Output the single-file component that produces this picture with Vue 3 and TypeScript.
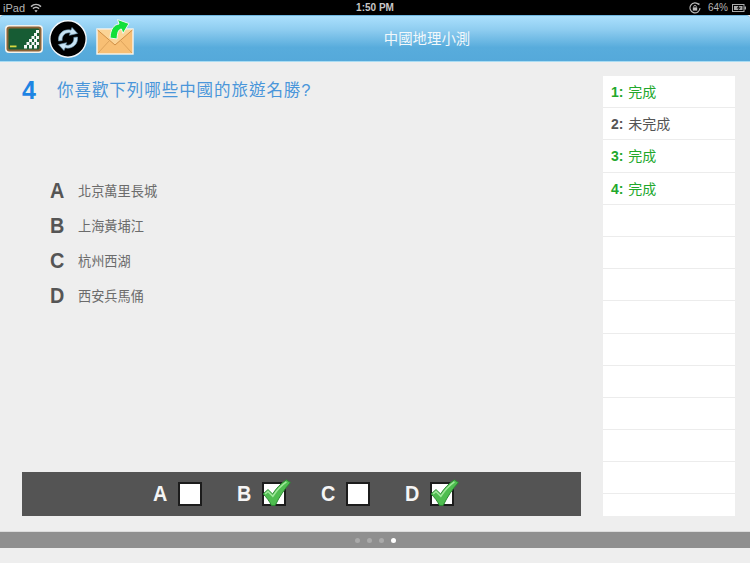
<template>
  <div class="screen">
    <div class="status-bar">
      <div class="status-left">
        <span>iPad</span>
        <svg class="wifi" width="12" height="10" viewBox="0 0 12 10">
          <path d="M1 3.6C4 .8 8 .8 11 3.6" fill="none" stroke="#bbb" stroke-width="1.5" />
          <path d="M2.9 5.6C4.8 3.9 7.2 3.9 9.1 5.6" fill="none" stroke="#bbb" stroke-width="1.5" />
          <path d="M6 9.4 4.4 7.5C5.4 6.7 6.6 6.7 7.6 7.5Z" fill="#bbb" />
        </svg>
      </div>
      <span class="status-time">1:50 PM</span>
      <div class="status-right">
        <svg width="12" height="12" viewBox="0 0 12 12">
          <path d="M9.8 2.6A5 5 0 1 0 11 6" fill="none" stroke="#bbb" stroke-width="1.1" />
          <path d="M8.6 1.2 10.6 1.4 10.2 3.6Z" fill="#bbb" />
          <rect x="3.8" y="5.4" width="4.4" height="3.2" fill="#bbb" />
          <path d="M4.8 5.4V4.4C4.8 3 7.2 3 7.2 4.4V5.4" fill="none" stroke="#bbb" stroke-width=".9" />
        </svg>
        <span class="battery-text">64%</span>
        <svg width="14" height="8" viewBox="0 0 14 8">
          <rect x=".5" y=".5" width="11.5" height="7" fill="none" stroke="#aaa" />
          <rect x="2" y="2" width="8.5" height="4" fill="#aaa" />
          <rect x="12.5" y="2.5" width="1.5" height="3" fill="#aaa" />
          <path d="M7.5 1 4.5 4.4H6.6L5.6 7 9 3.4H6.9Z" fill="#111" />
        </svg>
      </div>
    </div>

    <header class="app-header">
      <div class="tools">
        <svg class="icon-board" width="40" height="30" viewBox="0 0 40 30">
          <rect x="1" y="1" width="38" height="28" rx="4" fill="#f4f1ea" />
          <rect x="2.5" y="2.5" width="35" height="25" rx="3" fill="#8b6236" />
          <rect x="4.5" y="4.5" width="31" height="21" rx="1.5" fill="#175c34" />
          <rect x="6" y="21.5" width="6.5" height="1.8" fill="#d7d840" />
          <g fill="#f5f5f5">
            <rect x="32" y="6" width="3" height="3" />
            <rect x="30" y="9" width="3" height="3" />
            <rect x="32" y="12" width="3" height="3" />
            <rect x="27.5" y="12" width="3" height="3" />
            <rect x="30" y="15" width="3" height="3" />
            <rect x="25" y="15" width="3" height="3" />
            <rect x="32" y="18" width="3" height="3" />
            <rect x="27.5" y="18" width="3" height="3" />
            <rect x="22.5" y="18" width="3" height="3" />
            <rect x="30" y="21" width="3" height="3.5" />
            <rect x="25" y="21" width="3" height="3.5" />
            <rect x="20" y="21" width="3" height="3.5" />
          </g>
        </svg>
        <svg class="icon-sync" width="38" height="38" viewBox="0 0 38 38">
          <circle cx="19" cy="19" r="18.2" fill="#000" stroke="#f4f8fb" stroke-width="1.4" />
          <path d="M9.5 21C8.6 13.5 15 8.4 22 10.2L23 7.5 28.6 13.4 20.4 15.3 21.3 12.9C16.5 12 12.6 15.6 13.2 20.6Z" fill="#c9e3f3" stroke="#6f9db8" stroke-width=".6" />
          <path d="M28.5 17C29.4 24.5 23 29.6 16 27.8L15 30.5 9.4 24.6 17.6 22.7 16.7 25.1C21.5 26 25.4 22.4 24.8 17.4Z" fill="#c9e3f3" stroke="#6f9db8" stroke-width=".6" />
        </svg>
        <svg class="icon-mail" width="38" height="38" viewBox="0 0 38 38">
          <rect x="1" y="11" width="36" height="25" fill="#f8bf74" stroke="#f7f5ee" stroke-width="1.4" />
          <path d="M1.6 12 19 27 36.4 12" fill="#fbd496" stroke="#d08f45" stroke-width="1" />
          <path d="M2 35 14 22M36 35 24 22" stroke="#d99f58" stroke-width=".9" fill="none" />
          <path d="M14 20C14.5 11 18 6.5 23 6L21.5 1.5 33 5.5 27 15.5 25.4 11C22 11.6 21.5 15 21 21Z" fill="#12e03a" stroke="#f4f8f4" stroke-width="1" />
        </svg>
      </div>
      <h1 class="app-title">中國地理小測</h1>
    </header>

    <main class="content">
      <section class="question-pane">
        <div class="question">
          <span class="question-no">4</span>
          <span class="question-text">你喜歡下列哪些中國的旅遊名勝?</span>
        </div>
        <ul class="options">
          <li v-for="opt in options" :key="opt.key" class="option">
            <span class="option-key">{{ opt.key }}</span>
            <span class="option-label">{{ opt.label }}</span>
          </li>
        </ul>
        <div class="answer-bar">
          <div v-for="opt in options" :key="opt.key" class="answer">
            <span class="answer-key">{{ opt.key }}</span>
            <span class="answer-box">
              <svg v-if="opt.checked" class="tick" width="29" height="27" viewBox="0 0 29 27">
                <path d="M1 15 6 10.6 10.6 15C14.2 9.4 18.6 4.6 24.4 .8L28.4 3.6C22.6 10 17.4 17.6 13.2 26.4H9.4C7.4 22 4.6 18.4 1 15Z" fill="#4fbd50" stroke="#2c8a33" stroke-width="1" />
                <path d="M3 15 6 12.4 10.8 17.2C14.6 11.4 19.2 6.4 24.4 2.8" fill="none" stroke="#9fe89a" stroke-width="1.6" />
              </svg>
            </span>
          </div>
        </div>
      </section>

      <aside class="progress">
        <div
          v-for="row in rows"
          :key="row.no"
          class="progress-row"
          :class="{ done: row.status === '完成' }"
        >
          <template v-if="row.status"><b>{{ row.no }}:</b> {{ row.status }}</template>
        </div>
      </aside>
    </main>

    <footer class="pager">
      <span v-for="n in 4" :key="n" class="dot" :class="{ active: n === 4 }"></span>
    </footer>
  </div>
</template>

<script setup lang="ts">
const options = [
  { key: 'A', label: '北京萬里長城', checked: false },
  { key: 'B', label: '上海黃埔江', checked: true },
  { key: 'C', label: '杭州西湖', checked: false },
  { key: 'D', label: '西安兵馬俑', checked: true },
];

const statuses = ['完成', '未完成', '完成', '完成'];
const rows = Array.from({ length: 14 }, (_, i) => ({
  no: i + 1,
  status: statuses[i] ?? '',
}));
</script>

<style>
html,
body {
  margin: 0;
  background: #eeeeee;
}
</style>

<style scoped>
.screen {
  width: 750px;
  height: 563px;
  overflow: hidden;
  display: flex;
  flex-direction: column;
  background: #eeeeee;
  font-family: 'Liberation Sans', 'Noto Sans CJK TC', sans-serif;
}

.status-bar {
  height: 15px;
  flex: none;
  display: grid;
  grid-template-columns: 1fr auto 1fr;
  align-items: center;
  background: #000;
  color: #b4b4b4;
  font-size: 10px;
}

.status-left {
  display: flex;
  align-items: center;
  gap: 5px;
  padding-left: 3px;
}

.status-left span {
  font-size: 11px;
}

.status-time {
  color: #c8c8c8;
  font-weight: bold;
}

.status-right {
  display: flex;
  align-items: center;
  justify-content: flex-end;
  gap: 4px;
  padding-right: 4px;
}

.battery-text {
  margin-left: 3px;
}

.app-header {
  height: 47px;
  flex: none;
  display: flex;
  align-items: center;
  box-sizing: border-box;
  background: linear-gradient(#abe0fd 0%, #8fcdf0 30%, #58acdc 70%, #55a9da 100%);
  border-top: 1px solid #6fb6df;
  border-bottom: 1px solid #a9dcf3;
  border-radius: 4px 4px 0 0;
}

.tools {
  display: flex;
  align-items: center;
  padding-left: 4px;
  width: 131px;
  flex: none;
}

.icon-board {
  margin-right: 5px;
}

.icon-sync {
  margin-right: 9px;
}

.icon-mail {
  margin-top: -4px;
}

.app-title {
  flex: 1;
  margin: 0;
  padding: 0 31px 2px 0;
  text-align: center;
  font-size: 14.4px;
  font-weight: normal;
  color: #f2f8fb;
}

.content {
  flex: 1;
  min-height: 0;
  display: flex;
  padding: 14px 15px 15px 22px;
  justify-content: space-between;
}

.question-pane {
  width: 559px;
  display: flex;
  flex-direction: column;
}

.question {
  display: flex;
  align-items: center;
  height: 28px;
}

.question-no {
  width: 35px;
  font-size: 25px;
  font-weight: bold;
  color: #1d84e3;
}

.question-text {
  margin-top: -2px;
  font-size: 16.5px;
  letter-spacing: 0.95px;
  color: #4a96da;
}

.options {
  list-style: none;
  margin: 69px 0 0;
  padding: 0 0 0 28px;
}

.option {
  display: flex;
  align-items: center;
  height: 35px;
}

.option-key {
  width: 28px;
  font-size: 22px;
  font-weight: bold;
  color: #555;
  transform: scaleX(0.9);
  transform-origin: left center;
}

.option-label {
  font-size: 13.2px;
  color: #6b6b6b;
}

.answer-bar {
  margin-top: auto;
  height: 44px;
  flex: none;
  display: flex;
  justify-content: center;
  align-items: center;
  gap: 35px;
  padding-left: 3px;
  background: #545454;
}

.answer {
  display: flex;
  align-items: center;
  gap: 10px;
}

.answer-key {
  width: 15px;
  font-size: 22px;
  font-weight: bold;
  color: #f5f5f5;
  transform: scaleX(0.9);
  transform-origin: left center;
}

.answer-box {
  position: relative;
  width: 24px;
  height: 24px;
  box-sizing: border-box;
  background: #fff;
  border: 2px solid #1c1c1c;
}

.tick {
  position: absolute;
  left: -2px;
  top: -5px;
}

.progress {
  width: 132px;
  flex: none;
  overflow: hidden;
  background: #fff;
}

.progress-row {
  height: 32.2px;
  box-sizing: border-box;
  padding-left: 8px;
  line-height: 32px;
  font-size: 14px;
  word-spacing: 1px;
  color: #555;
  border-bottom: 1.5px solid #ececec;
}

.progress-row.done {
  color: #22a82c;
}

.pager {
  height: 17px;
  flex: none;
  display: flex;
  align-items: center;
  justify-content: center;
  gap: 7px;
  margin-bottom: 15px;
  background: #8f8f8f;
  border-top: 1px solid #dcdcdc;
  box-sizing: border-box;
}

.dot {
  width: 5px;
  height: 5px;
  border-radius: 50%;
  background: #aaaaaa;
}

.dot.active {
  background: #fff;
}
</style>
